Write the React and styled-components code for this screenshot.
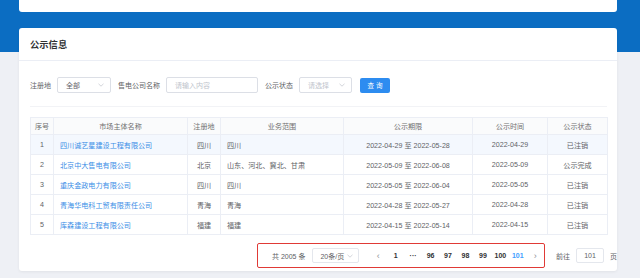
import React from "react";
import styled, { createGlobalStyle } from "styled-components";

const Global = createGlobalStyle`
  html, body { margin: 0; padding: 0; }
  body {
    width: 640px; height: 278px; overflow: hidden;
    background: linear-gradient(#0b6dc2 0, #0b6dc2 52px, #eef0f5 52px);
    font-family: "Liberation Sans", "Noto Sans CJK SC", sans-serif;
    color: #303133;
    white-space: nowrap;
  }
`;

const Page = styled.div`
  display: flex;
  flex-direction: column;
  gap: 16px;
  padding: 0 23px 0 19px;
`;

const TopCard = styled.div`
  height: 12px;
  background: #fff;
  border-radius: 0 0 3px 3px;
`;

const Card = styled.div`
  background: #fff;
  border-radius: 3px;
  box-shadow: 0 1px 3px rgba(0, 0, 0, 0.06);
  height: 243px;
  display: flex;
  flex-direction: column;
`;

const CardHeader = styled.div`
  height: 32px;
  border-bottom: 1px solid #ebeef5;
  display: flex;
  align-items: center;
  padding-left: 11px;
  font-size: 9.3px;
  font-weight: 600;
  color: #303133;
  font-family: "Noto Sans CJK SC", sans-serif;
`;

const CardBody = styled.div`
  padding: 16px 10px 0 11px;
  display: flex;
  flex-direction: column;
`;

const Filters = styled.div`
  display: flex;
  align-items: center;
  height: 16px;
  padding-bottom: 13px;
  border-bottom: 1px solid #f2f3f6;
`;

const Label = styled.span`
  font-size: 7px;
  color: #606266;
  margin-right: 6px;
`;

const Field = styled.div`
  box-sizing: border-box;
  width: ${(p) => p.w}px;
  height: 16px;
  border: 1px solid #dcdfe6;
  border-radius: 2px;
  display: flex;
  align-items: center;
  justify-content: space-between;
  padding: 0 6px 0 8px;
  font-size: 7px;
  color: ${(p) => (p.placeholder ? "#c0c4cc" : "#606266")};
  margin-right: 7px;
`;

const Button = styled.button`
  width: 30px;
  height: 15px;
  border: none;
  border-radius: 2px;
  background: #2d8cf0;
  color: #fff;
  font-size: 6.5px;
  padding: 0;
  margin-left: 1px;
  font-family: inherit;
`;

const Table = styled.table`
  margin-top: 10px;
  border-collapse: collapse;
  width: 577px;
  table-layout: fixed;
  font-size: 7.1px;
  color: #606266;
`;

const Th = styled.th`
  height: 16px;
  font-weight: normal;
  color: #707070;
  background: #fafbfc;
  border: 1px solid #ebeef5;
  text-align: center;
  padding: 0;
`;

const Tr = styled.tr`
  background: ${(p) => (p.hl ? "#f4f8fe" : "#fff")};
`;

const Td = styled.td`
  height: 19px;
  border: 1px solid #ebeef5;
  text-align: ${(p) => (p.left ? "left" : "center")};
  padding: 0 ${(p) => (p.left ? "6px" : "0")};
  color: ${(p) => (p.link ? "#3a8ee6" : "#606266")};
  overflow: hidden;
`;

const Footer = styled.div`
  margin-top: 8px;
  display: flex;
  align-items: center;
  padding-left: 227px;
`;

const PagerBox = styled.div`
  box-sizing: border-box;
  width: 288px;
  height: 25px;
  border: 1.5px solid #e03a36;
  border-radius: 2px;
  display: flex;
  align-items: center;
  padding-left: 14px;
  font-size: 7px;
  color: #606266;
`;

const Total = styled.span`
  margin-right: 7px;
`;

const SizeSelect = styled.div`
  box-sizing: border-box;
  width: 48px;
  height: 15px;
  border: 1px solid #e4e7ed;
  border-radius: 2px;
  display: flex;
  align-items: center;
  justify-content: space-between;
  padding: 0 5px 0 7px;
  margin-right: 10px;
`;

const PageItem = styled.span`
  width: 18px;
  text-align: center;
  font-weight: ${(p) => (p.arrow ? "normal" : "bold")};
  color: ${(p) => (p.active ? "#409eff" : p.arrow ? "#909399" : "#303133")};
  font-size: ${(p) => (p.arrow ? "9px" : "7px")};
`;

const Jump = styled.div`
  display: flex;
  align-items: center;
  margin-left: 11px;
  font-size: 7px;
  color: #606266;
  gap: 3px;
`;

const JumpInput = styled.div`
  box-sizing: border-box;
  width: 28px;
  height: 15px;
  border: 1px solid #e4e7ed;
  border-radius: 2px;
  display: flex;
  align-items: center;
  justify-content: center;
  margin: 0 3px;
`;

const Chevron = () => (
  <svg width="6" height="4" viewBox="0 0 6 4">
    <path d="M0.5 0.8 L3 3.2 L5.5 0.8" fill="none" stroke="#c0c4cc" strokeWidth="0.7" />
  </svg>
);

const rows = [
  ["1", "四川诚艺星建设工程有限公司", "四川", "四川", "2022-04-29 至 2022-05-28", "2022-04-29", "已注销"],
  ["2", "北京中大售电有限公司", "北京", "山东、河北、冀北、甘肃", "2022-05-09 至 2022-06-08", "2022-05-09", "公示完成"],
  ["3", "重庆金政电力有限公司", "四川", "四川", "2022-05-05 至 2022-06-04", "2022-05-05", "已注销"],
  ["4", "青海华电科工贸有限责任公司", "青海", "青海", "2022-04-28 至 2022-05-27", "2022-04-28", "已注销"],
  ["5", "库森建设工程有限公司", "福建", "福建", "2022-04-15 至 2022-05-14", "2022-04-15", "已注销"],
];

const widths = [23, 134, 33, 123, 129, 75, 60];
const headers = ["序号", "市场主体名称", "注册地", "业务范围", "公示期限", "公示时间", "公示状态"];
const pages = ["1", "···", "96", "97", "98", "99", "100", "101"];

export default function App() {
  return (
    <>
      <Global />
      <Page>
        <TopCard />
        <Card>
          <CardHeader>公示信息</CardHeader>
          <CardBody>
            <Filters>
              <Label>注册地</Label>
              <Field w={54}>
                全部 <Chevron />
              </Field>
              <Label>售电公司名称</Label>
              <Field w={92} placeholder>
                请输入内容
              </Field>
              <Label>公示状态</Label>
              <Field w={53} placeholder>
                请选择 <Chevron />
              </Field>
              <Button>查 询</Button>
            </Filters>
            <Table>
              <colgroup>
                {widths.map((w, i) => (
                  <col key={i} style={{ width: w }} />
                ))}
              </colgroup>
              <thead>
                <tr>
                  {headers.map((h) => (
                    <Th key={h}>{h}</Th>
                  ))}
                </tr>
              </thead>
              <tbody>
                {rows.map((r, i) => (
                  <Tr key={i} hl={i === 0}>
                    <Td>{r[0]}</Td>
                    <Td left link>{r[1]}</Td>
                    <Td>{r[2]}</Td>
                    <Td left>{r[3]}</Td>
                    <Td>{r[4]}</Td>
                    <Td>{r[5]}</Td>
                    <Td>{r[6]}</Td>
                  </Tr>
                ))}
              </tbody>
            </Table>
            <Footer>
              <PagerBox>
                <Total>共 2005 条</Total>
                <SizeSelect>
                  20条/页 <Chevron />
                </SizeSelect>
                <PageItem arrow>‹</PageItem>
                {pages.map((p) => (
                  <PageItem key={p} active={p === "101"}>
                    {p}
                  </PageItem>
                ))}
                <PageItem arrow>›</PageItem>
              </PagerBox>
              <Jump>
                前往
                <JumpInput>101</JumpInput>
                页
              </Jump>
            </Footer>
          </CardBody>
        </Card>
      </Page>
    </>
  );
}
